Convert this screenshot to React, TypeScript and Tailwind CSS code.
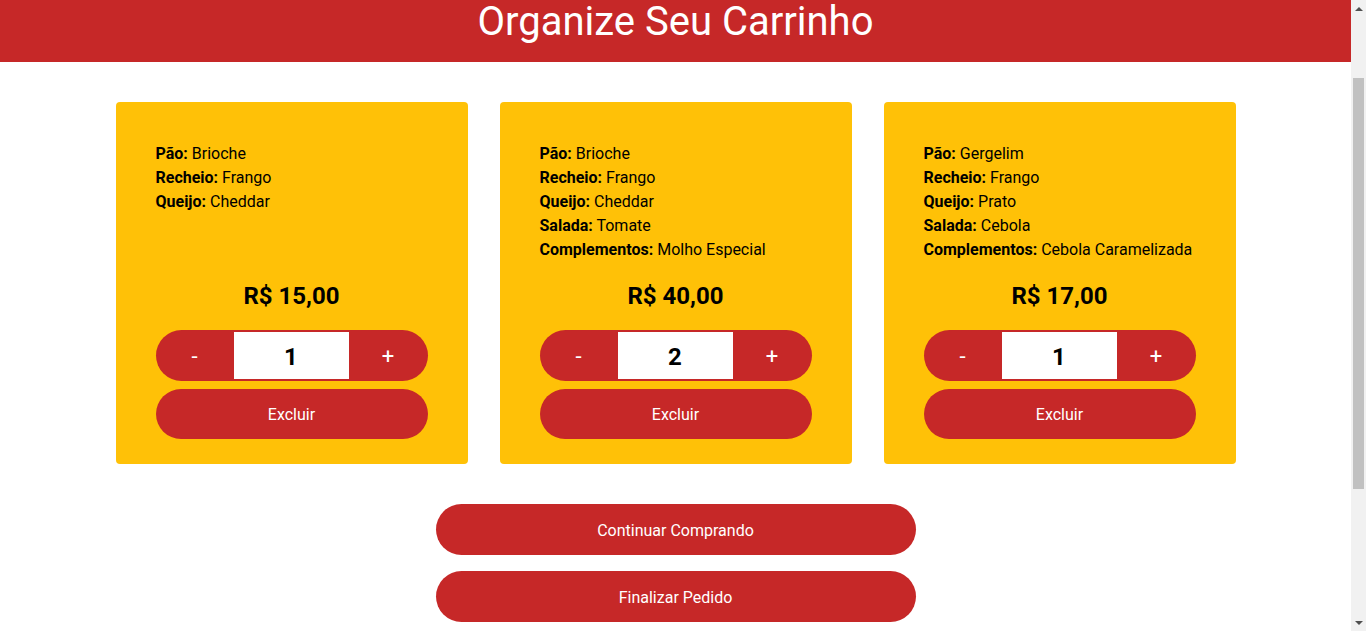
import React, { useState } from 'react';

interface Burger {
  id: number;
  details: { label: string; value: string }[];
  price: number;
  qty: number;
}

const initialCart: Burger[] = [
  {
    id: 1,
    details: [
      { label: 'Pão', value: 'Brioche' },
      { label: 'Recheio', value: 'Frango' },
      { label: 'Queijo', value: 'Cheddar' },
    ],
    price: 15,
    qty: 1,
  },
  {
    id: 2,
    details: [
      { label: 'Pão', value: 'Brioche' },
      { label: 'Recheio', value: 'Frango' },
      { label: 'Queijo', value: 'Cheddar' },
      { label: 'Salada', value: 'Tomate' },
      { label: 'Complementos', value: 'Molho Especial' },
    ],
    price: 40,
    qty: 2,
  },
  {
    id: 3,
    details: [
      { label: 'Pão', value: 'Gergelim' },
      { label: 'Recheio', value: 'Frango' },
      { label: 'Queijo', value: 'Prato' },
      { label: 'Salada', value: 'Cebola' },
      { label: 'Complementos', value: 'Cebola Caramelizada' },
    ],
    price: 17,
    qty: 1,
  },
];

export default function App() {
  const [cart, setCart] = useState<Burger[]>(initialCart);

  const changeQty = (id: number, delta: number) => {
    setCart(cart.map(item => (item.id === id ? { ...item, qty: Math.max(1, item.qty + delta) } : item)));
  };

  const removeItem = (id: number) => {
    setCart(cart.filter(item => item.id !== id));
  };

  return (
    <div className="flex h-screen overflow-hidden bg-white text-black font-['Roboto',sans-serif]">
      <main className="flex-1 min-w-0">
        {/* Header */}
        <header className="h-[62px] bg-[#c62828] overflow-hidden flex justify-center">
          <h1 className="text-white text-[40px] leading-[47px] -mt-[2px]">Organize Seu Carrinho</h1>
        </header>

        {/* Cart cards */}
        <div className="flex justify-center gap-8 mt-10">
          {cart.map(item => (
            <div key={item.id} className="w-[352px] bg-[#ffc107] rounded flex flex-col pt-10 px-10 pb-[25px]">
              <div className="flex-1 text-base leading-6">
                {item.details.map(d => (
                  <p key={d.label}>
                    <span className="font-bold">{d.label}:</span> {d.value}
                  </p>
                ))}
              </div>
              <h3 className="mt-[18px] text-2xl leading-8 font-bold text-center">
                R$ {item.price.toFixed(2).replace('.', ',')}
              </h3>
              <div className="mt-[18px] h-[51px] bg-[#c62828] rounded-full flex items-center">
                <button
                  onClick={() => changeQty(item.id, -1)}
                  className="w-[78px] h-full text-white text-[22px] pt-[2px]"
                >
                  -
                </button>
                <input
                  type="text"
                  readOnly
                  value={item.qty}
                  className="w-[115px] h-[47px] bg-white text-center text-2xl font-bold outline-none pt-[2px]"
                />
                <button
                  onClick={() => changeQty(item.id, 1)}
                  className="flex-1 h-full text-white text-[22px] pt-[2px]"
                >
                  +
                </button>
              </div>
              <button
                onClick={() => removeItem(item.id)}
                className="mt-2 h-[50px] bg-[#c62828] rounded-full text-white text-base pt-[1px]"
              >
                Excluir
              </button>
            </div>
          ))}
        </div>

        {/* Actions */}
        <div className="flex flex-col items-center mt-10 gap-4">
          <button className="w-[480px] h-[51px] bg-[#c62828] rounded-full text-white text-base pt-[2px]">
            Continuar Comprando
          </button>
          <button className="w-[480px] h-[51px] bg-[#c62828] rounded-full text-white text-base pt-[2px]">
            Finalizar Pedido
          </button>
        </div>
      </main>

      {/* Scrollbar */}
      <div className="w-[15px] shrink-0 bg-[#f1f1f1] flex flex-col items-center">
        <div className="h-[17px] flex items-center justify-center">
          <div className="w-0 h-0 border-x-[4px] border-x-transparent border-b-[4px] border-b-[#505050]" />
        </div>
        <div className="mt-[61px] w-[11px] h-[411px] bg-[#c1c1c1]" />
        <div className="flex-1" />
        <div className="h-[17px] flex items-center justify-center">
          <div className="w-0 h-0 border-x-[4px] border-x-transparent border-t-[4px] border-t-[#505050]" />
        </div>
      </div>
    </div>
  );
}
